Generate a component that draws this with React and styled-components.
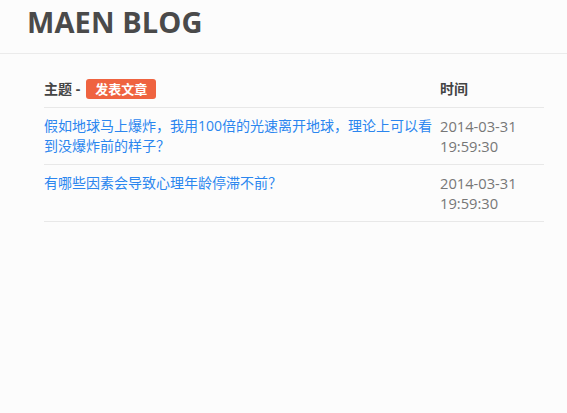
import React from "react";
import styled, { createGlobalStyle } from "styled-components";

const Global = createGlobalStyle`
  html, body { margin: 0; padding: 0; background: #fcfcfc; }
  body {
    font-family: "Open Sans", "Noto Sans CJK SC", sans-serif;
    font-size: 14px;
    line-height: 20px;
    color: #555;
  }
`;

const Header = styled.header`
  height: 53px;
  border-bottom: 1px solid #ebebeb;
  padding-left: 27px;
  display: flex;
  align-items: center;
`;

const Logo = styled.h1`
  margin: 0;
  font-size: 29px;
  font-weight: 700;
  color: #4a4a4a;
  line-height: 44px;
  margin-top: -9px;
  letter-spacing: 0.1px;
`;

const Main = styled.main`
  padding: 17px 23px 0 44px;
`;

const Table = styled.table`
  width: 500px;
  border-collapse: collapse;
  table-layout: fixed;
`;

const Th = styled.th`
  text-align: left;
  font-weight: 700;
  color: #444;
  padding: 8px ${(p) => (p.$time ? "0" : "8px")} 8px 0;
  border-bottom: 1px solid #e8e8e8;
  width: ${(p) => (p.$time ? "104px" : "auto")};
  vertical-align: middle;
`;

const HeadInner = styled.div`
  display: flex;
  align-items: center;
  gap: 4px;
  height: 20px;
`;

const Badge = styled.a`
  display: inline-block;
  background: #ef6340;
  color: #fff;
  font-size: 13px;
  font-weight: 700;
  line-height: 20px;
  height: 20px;
  padding: 0 9px;
  border-radius: 3px;
  text-decoration: none;
  margin-left: 2px;
`;

const Td = styled.td`
  padding: 8px ${(p) => (p.$time ? "0" : "8px")} 8px 0;
  border-bottom: 1px solid #e8e8e8;
  vertical-align: top;
  color: ${(p) => (p.$time ? "#777" : "inherit")};
  font-size: ${(p) => (p.$time ? "14.7px" : "14px")};
`;

const Link = styled.a`
  color: #2b86ef;
  text-decoration: none;
`;

const posts = [
  {
    title: "假如地球马上爆炸，我用100倍的光速离开地球，理论上可以看到没爆炸前的样子？",
    time: "2014-03-31 19:59:30",
  },
  { title: "有哪些因素会导致心理年龄停滞不前？", time: "2014-03-31 19:59:30" },
];

export default function App() {
  return (
    <>
      <Global />
      <Header>
        <Logo>MAEN BLOG</Logo>
      </Header>
      <Main>
        <Table>
          <thead>
            <tr>
              <Th>
                <HeadInner>
                  主题 - <Badge href="#">发表文章</Badge>
                </HeadInner>
              </Th>
              <Th $time>时间</Th>
            </tr>
          </thead>
          <tbody>
            {posts.map((p, i) => (
              <tr key={i}>
                <Td>
                  <Link href="#">{p.title}</Link>
                </Td>
                <Td $time>{p.time}</Td>
              </tr>
            ))}
          </tbody>
        </Table>
      </Main>
    </>
  );
}
